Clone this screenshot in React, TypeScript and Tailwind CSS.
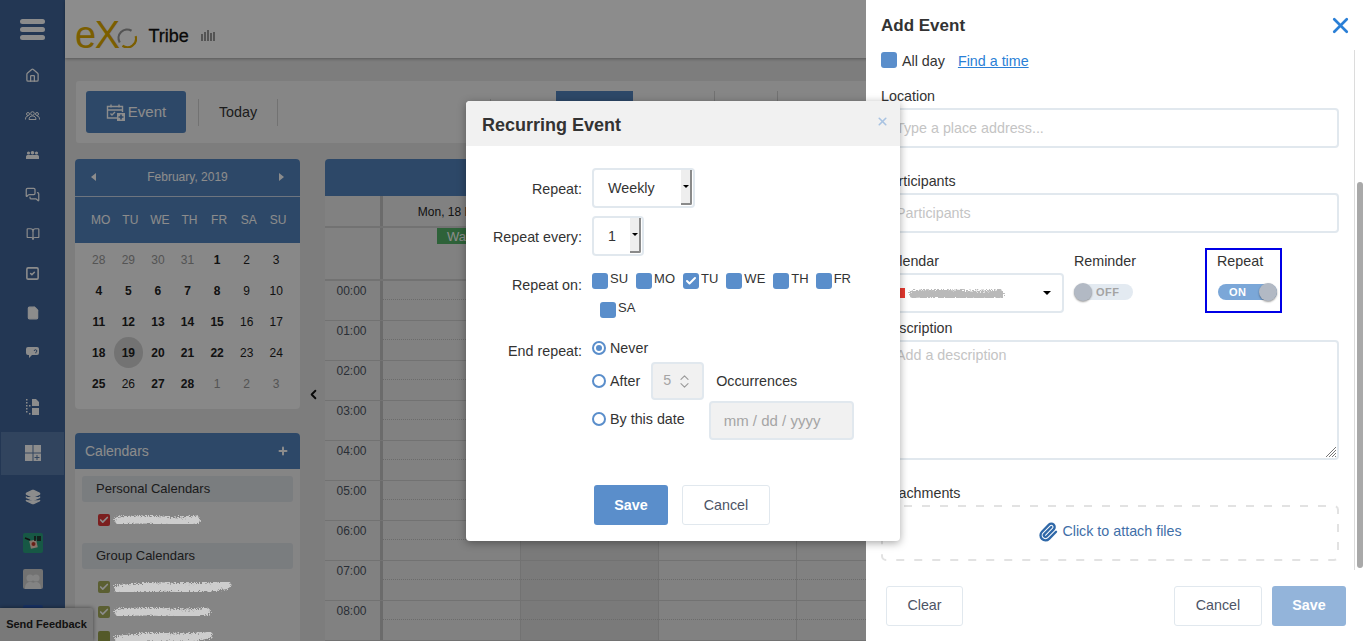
import { useId } from 'react';
import {
  BookOpen,
  Check,
  ChevronLeft,
  ChevronsUpDown,
  File,
  Home,
  Layers,
  MessagesSquare,
  Paperclip,
  Plus,
  SquareCheck,
  X,
} from 'lucide-react';

const weekdays = ['MO', 'TU', 'WE', 'TH', 'FR', 'SA', 'SU'];

// [day, bold, muted]
const days: [number, boolean, boolean][] = [
  [28, false, true], [29, false, true], [30, false, true], [31, false, true], [1, true, false], [2, false, false], [3, false, false],
  [4, true, false], [5, true, false], [6, true, false], [7, true, false], [8, true, false], [9, false, false], [10, false, false],
  [11, true, false], [12, true, false], [13, true, false], [14, true, false], [15, true, false], [16, false, false], [17, false, false],
  [18, true, false], [19, true, false], [20, true, false], [21, true, false], [22, true, false], [23, false, false], [24, false, false],
  [25, true, false], [26, false, false], [27, true, false], [28, true, false], [1, false, true], [2, false, true], [3, false, true],
];

const hours = ['00:00', '01:00', '02:00', '03:00', '04:00', '05:00', '06:00', '07:00', '08:00'];
const columns = ['Mon, 18 Feb', 'Tue, 19 Feb', 'Wed, 20 Feb', 'Thu, 21 Feb'];
const repeatDays = ['SU', 'MO', 'TU', 'WE', 'TH', 'FR', 'SA'];

// Scribbled-out names in the screenshot; sits above the dimming layer
function Redacted({ width, height = 16, tilt = 0, color = '#cdcdcd' }: { width: number; height?: number; tilt?: number; color?: string }) {
  const id = useId();
  const mid = height / 2;
  return (
    <svg width={width} height={height} className="relative z-20 shrink-0 overflow-visible">
      <filter id={id} x="-10%" y="-40%" width="120%" height="180%">
        <feTurbulence type="fractalNoise" baseFrequency="1.1" numOctaves="2" seed="7" />
        <feDisplacementMap in="SourceGraphic" scale="7" />
      </filter>
      <g filter={`url(#${id})`} stroke={color} fill="none" strokeLinecap="round">
        <path
          d={`M4 ${mid + 1 + tilt} Q${width * 0.3} ${mid - 1 + tilt / 2} ${width * 0.55} ${mid + 1} T${width - 5} ${mid - tilt}`}
          strokeWidth={height * 0.6}
        />
        <path d={`M${width * 0.25} ${mid - 2} L${width * 0.8} ${mid + 2 - tilt}`} strokeWidth={height * 0.35} />
      </g>
    </svg>
  );
}

function CalendarCheck({ color, checked = true }: { color: string; checked?: boolean }) {
  return (
    <span className={`flex h-3 w-3 shrink-0 items-center justify-center rounded-[2px] ${color}`}>
      {checked && <Check size={10} strokeWidth={4} className="text-white" />}
    </span>
  );
}

function Sidebar() {
  const iconClass = 'text-white';
  const icons = [
    <Home key="home" size={15} className={iconClass} />,
    <svg key="groups" width="15" height="9" viewBox="0 0 15 9" fill="none" stroke="white" strokeWidth="1">
      <circle cx="7.5" cy="2.5" r="1.8" />
      <circle cx="3" cy="3" r="1.5" />
      <circle cx="12" cy="3" r="1.5" />
      <path d="M.5 8.5c0-2.5 1-3.5 2.5-3.5M14.5 8.5c0-2.5-1-3.5-2.5-3.5M4 8.5c0-2.5 1.5-3.5 3.5-3.5S11 6 11 8.5z" />
    </svg>,
    <svg key="people" width="13" height="8" viewBox="0 0 13 8" fill="white">
      <circle cx="2.5" cy="2" r="1.6" />
      <circle cx="6.5" cy="1.8" r="1.8" />
      <circle cx="10.5" cy="2" r="1.6" />
      <path d="M0 8V5.5C0 4.5 1 4 2 4h9c1 0 2 .5 2 1.5V8z" />
    </svg>,
    <MessagesSquare key="chat" size={15} className={iconClass} />,
    <BookOpen key="wiki" size={14} className={iconClass} />,
    <SquareCheck key="tasks" size={15} strokeWidth={2.5} className={iconClass} />,
    <File key="docs" size={14} fill="white" className={iconClass} />,
    <svg key="forum" width="13" height="11" viewBox="0 0 13 11">
      <path d="M2 0h9a2 2 0 0 1 2 2v4a2 2 0 0 1-2 2H6l-3 3V8H2a2 2 0 0 1-2-2V2a2 2 0 0 1 2-2z" fill="white" />
      <path d="M8.2 4a1.3 1.3 0 1 1 1.6 1.3v1" stroke="#40659a" strokeWidth="1" fill="none" />
    </svg>,
  ];

  return (
    <aside className="flex h-full w-[65px] shrink-0 flex-col items-center bg-[#40659a]">
      <div className="flex h-[56px] w-full flex-col items-center gap-[3px] pt-[19px]">
        <span className="h-[5px] w-[25px] rounded-full bg-white" />
        <span className="h-[5px] w-[25px] rounded-full bg-white" />
        <span className="h-[5px] w-[25px] rounded-full bg-white" />
      </div>
      {icons.map(icon => (
        <div key={icon.key} className="flex h-[39.5px] items-center justify-center">
          {icon}
        </div>
      ))}
      <div className="mt-[15px] flex h-[39.5px] items-center justify-center">
        <svg width="13" height="16" viewBox="0 0 13 16" fill="white">
          <path d="M0 0h1.5v1.5H0zM0 3h1.5v1.5H0zM0 6h1.5v1.5H0zM3 6h1.5v1.5H3zM0 9h1.5v1.5H0zM0 12h1.5v1.5H0zM3 14h1.5v1.5H3zM6 0h4l3 3v4H6zM6 9h7v7H6z" />
        </svg>
      </div>
      <div className="mt-[5px] flex h-[43px] w-[63px] items-center justify-center bg-[#5a7cab]">
        <svg width="16" height="16" viewBox="0 0 16 16" fill="white">
          <path d="M0 0h7.5v7.5H0zM8.5 0H16v7.5H8.5zM0 8.5h7.5V16H0zM8.5 8.5H16V16H8.5zM11.5 10v2h-2v1h2v2h1v-2h2v-1h-2v-2z" fillRule="evenodd" />
        </svg>
      </div>
      <div className="mt-[3px] flex h-[39.5px] items-center justify-center">
        <Layers size={16} fill="white" className={iconClass} />
      </div>
      <div className="mt-4 flex h-5 w-5 items-center justify-center rounded-[2px] bg-[#2aa07f]">
        <svg width="18" height="18" viewBox="0 0 18 18">
          <rect x="6" y="6" width="7" height="8" fill="#f2d6c4" transform="rotate(-12 10 10)" />
          <path d="M1 4l5 2M11 2v5M14 2v5M16 2v5" stroke="#222" strokeWidth="1.6" />
          <circle cx="9.5" cy="10" r="2" fill="#c0392b" />
        </svg>
      </div>
      <div className="mt-4 flex h-5 w-5 items-end justify-center overflow-hidden rounded-[2px] bg-[#d0d0d0]">
        <svg width="18" height="17" viewBox="0 0 18 17" fill="#efefef">
          <circle cx="6" cy="6" r="3.5" />
          <circle cx="12" cy="6" r="3.5" />
          <path d="M1 17c0-5 2-7 5-7s3 1 3 1 1-1 3-1c3 0 5 2 5 7z" />
        </svg>
      </div>
      <div className="mt-4 h-5 w-5 rounded-[2px] bg-[#2c5bb5]" />
    </aside>
  );
}

function MiniCalendar() {
  return (
    <section className="shrink-0 overflow-hidden rounded-[4px] bg-[#f7f7f7]">
      <div className="flex h-[38px] items-center justify-between border-b border-[#c8d6e8] bg-[#5384bd] px-4 pb-[2px] text-[12px] text-white">
        <span className="h-0 w-0 border-y-[4px] border-r-[5px] border-y-transparent border-r-white" />
        <span>February, 2019</span>
        <span className="h-0 w-0 border-y-[4px] border-l-[5px] border-y-transparent border-l-white" />
      </div>
      <div className="grid h-[46px] grid-cols-7 items-center bg-[#5384bd] pl-[11px] pr-[7px] text-center text-[12px] text-white">
        {weekdays.map(day => (
          <span key={day}>{day}</span>
        ))}
      </div>
      <div className="grid grid-cols-7 px-[9px] pb-[10px] pt-px text-center text-[12px] text-[#222]">
        {days.map(([day, bold, muted], i) => (
          <span
            key={i}
            className={`flex h-[31px] items-center justify-center ${bold ? 'font-bold' : ''} ${muted ? 'text-[#999]' : ''} ${
              day === 19 ? 'rounded-[50%] bg-[#d2d2d2]' : ''
            }`}
          >
            {day}
          </span>
        ))}
      </div>
    </section>
  );
}

function CalendarsPanel() {
  return (
    <section className="mt-6 shrink-0 rounded-t-[4px] bg-[#f2f2f2] pb-4">
      <div className="flex h-9 items-center justify-between rounded-t-[4px] bg-[#5384bd] pl-[10px] pr-[11px] text-[14px] text-white">
        <span>Calendars</span>
        <Plus size={12} strokeWidth={4} />
      </div>
      <div className="px-[7px] pt-[7px] text-[13px] text-[#333]">
        <div className="flex h-[26px] items-center rounded-[3px] bg-[#dfe3e8] pl-[14px]">Personal Calendars</div>
        <div className="flex h-[41px] items-center gap-[5px] pb-[6px] pl-4">
          <CalendarCheck color="bg-[#e03a3a]" />
          <Redacted width={86} height={13} />
        </div>
        <div className="flex h-[26px] items-center rounded-[3px] bg-[#dfe3e8] pl-[14px]">Group Calendars</div>
        <div className="flex h-[30px] items-center gap-[5px] pl-4 pt-[5px]">
          <CalendarCheck color="bg-[#a6ad5c]" />
          <Redacted width={116} height={15} tilt={2} />
        </div>
        <div className="flex h-[25px] items-center gap-[5px] pl-4">
          <CalendarCheck color="bg-[#a6ad5c]" />
          <Redacted width={96} height={13} />
        </div>
        <div className="flex h-[25px] items-center gap-[5px] pl-4">
          <CalendarCheck color="bg-[#9aa34c]" checked={false} />
          <Redacted width={98} height={13} tilt={2} />
        </div>
      </div>
    </section>
  );
}

function WeekGrid() {
  return (
    <section className="min-w-0 flex-1">
      <div className="h-[37px] rounded-t-[4px] bg-[#5384bd]" />
      <div className="flex h-[32px] border-b-2 border-[#cfcfcf] bg-[#ececec]">
        <div className="w-[58px] shrink-0 border-r-[3px] border-[#c4c4c4]" />
        {columns.map(label => (
          <div key={label} className="flex w-[138px] shrink-0 items-center justify-center border-r border-[#cfcfcf] pt-px text-[12px] text-[#222]">
            {label}
          </div>
        ))}
      </div>
      <div className="flex h-[53px] border-b-2 border-[#cfcfcf] bg-[#ececec]">
        <div className="w-[58px] shrink-0 border-r-[3px] border-[#c4c4c4]" />
        <div className="w-[138px] shrink-0 border-r border-[#cfcfcf] pl-[54px]">
          <div className="flex h-4 items-center bg-[#55b368] pl-[10px] pt-px text-[13px] text-white">Wake up</div>
        </div>
      </div>
      {hours.map(hour => (
        <div key={hour} className="flex h-10 border-b border-[#cfcfcf] bg-[#ececec]">
          <div className="flex w-[58px] shrink-0 justify-center border-r-[3px] border-[#c4c4c4] pt-px pr-[2px] text-[12px] text-[#4c5563]">
            {hour}
          </div>
          {columns.map((label, i) => (
            <div key={label} className={`w-[138px] shrink-0 border-r border-[#cfcfcf] ${i === 1 ? 'bg-[#dedede]' : ''}`}>
              <div className="h-[19px] border-b border-dotted border-[#c4c4c4]" />
            </div>
          ))}
        </div>
      ))}
    </section>
  );
}

function CalendarPage() {
  return (
    <div className="flex h-full min-w-0 flex-1 flex-col bg-[#e4e4e4]">
      <header className="flex h-[58px] shrink-0 items-center bg-white pl-[10px] pt-[12px] shadow-[0_1px_3px_rgba(0,0,0,0.3)]">
        <span className="text-[38px] leading-none tracking-[-1.5px] text-[#e0ab00]">eX</span>
        <svg width="20" height="20" viewBox="0 0 22 22" className="-ml-px mt-[5px]">
          <path d="M3 16A9.5 9.5 0 0 1 16 3" stroke="#9a9a9a" strokeWidth="2.4" fill="none" />
          <path d="M20.5 9A9.5 9.5 0 0 1 6 19.5" stroke="#e0ab00" strokeWidth="2.4" fill="none" />
        </svg>
        <span className="ml-[11px] mt-[2px] text-[18px] text-[#111] [-webkit-text-stroke:0.3px_#111]">Tribe</span>
        <svg width="15" height="11" viewBox="0 0 15 11" fill="#999" className="ml-[12px] mt-[1px]">
          <path d="M0 4h2v7H0zM3 2h2v9H3zM6 0h2v11H6zM9 3h2v8H9zM12 2h2v9h-2z" />
        </svg>
      </header>
      <div className="min-h-0 flex-1 pl-[10px] pt-[23px]">
        <div className="ml-px flex h-[62px] items-center rounded-l-[3px] bg-[#f4f4f4] pl-[10px] text-[14.3px]">
          <button className="flex h-[42px] w-[100px] items-center justify-center gap-[3px] rounded-[3px] bg-[#5384bd] text-[15px] text-white">
            <svg width="19" height="19" viewBox="0 0 19 19" fill="none" stroke="white" strokeWidth="1.4">
              <path d="M11 15H1.5V3.5h15V9M1.5 7h15M5 1.5v3M13 1.5v3M4.5 10.5l1.5 1.5 3-3" />
              <path d="M11 10h8v8h-8z" fill="white" stroke="none" />
              <path d="M15 11.5v5M12.5 14h5" stroke="#5384bd" strokeWidth="1.6" />
            </svg>
            Event
          </button>
          <span className="ml-3 h-[27px] w-px bg-[#cfcfcf]" />
          <span className="w-[78px] pt-[2px] text-center text-[#333]">Today</span>
          <span className="h-[27px] w-px bg-[#cfcfcf]" />
          <span className="ml-[212px] h-[27px] w-px bg-[#cfcfcf]" />
          <span className="ml-[65px] h-[42px] w-[77px] bg-[#5384bd]" />
          <span className="ml-[81px] h-[42px] w-px bg-[#cfcfcf]" />
          <span className="ml-[62px] h-[42px] w-px bg-[#cfcfcf]" />
        </div>
        <div className="mt-[16px] flex h-[482px] overflow-hidden">
          <div className="flex w-[225px] shrink-0 flex-col">
            <MiniCalendar />
            <CalendarsPanel />
          </div>
          <div className="flex w-[25px] shrink-0 justify-center pl-[2px] pt-[228px] text-[#111]">
            <ChevronLeft size={15} strokeWidth={3} />
          </div>
          <WeekGrid />
        </div>
      </div>
    </div>
  );
}

function BlueCheckbox({ checked = false }: { checked?: boolean }) {
  return (
    <span className="flex h-4 w-4 shrink-0 items-center justify-center rounded-[3px] bg-[#5a8ecb]">
      {checked && <Check size={12} strokeWidth={4} className="text-white" />}
    </span>
  );
}

function Radio({ checked = false }: { checked?: boolean }) {
  return (
    <span className="flex h-[14px] w-[14px] shrink-0 items-center justify-center rounded-full border-2 border-[#5a8ecb]">
      {checked && <span className="h-[6px] w-[6px] rounded-full bg-[#5a8ecb]" />}
    </span>
  );
}

function NativeSelect({ value, width }: { value: string; width: string }) {
  return (
    <div className={`flex h-10 items-stretch rounded-[4px] border-2 border-[#e1e8ee] bg-white pb-px pr-px ${width}`}>
      <span className="flex-1 pl-[14px] text-[14.3px] leading-[36px] text-[#333]">{value}</span>
      <span className="flex w-[11px] items-center justify-center rounded-br-[2px] border-b-2 border-r-2 border-[#8a8a8a] bg-[#eeeeee]">
        <span className="h-0 w-0 border-x-[3px] border-t-[3px] border-x-transparent border-t-black" />
      </span>
    </div>
  );
}

function RecurringModal() {
  return (
    <div className="absolute left-[466px] top-[101px] z-30 h-[440px] w-[434px] overflow-hidden rounded-[4px] bg-white text-[14.3px] text-[#333] shadow-[0_2px_8px_rgba(0,0,0,0.35)]">
      <div className="flex h-[45px] items-center justify-between bg-[#f1f1f1] pl-4 pr-[11px] pt-[3px]">
        <h2 className="text-[18px] font-bold text-[#333]">Recurring Event</h2>
        <X size={13} strokeWidth={3} className="mb-[8px] text-[#a9c3e2]" />
      </div>
      <div className="grid grid-cols-[116px_1fr] gap-x-[10px] pt-[22px]">
        <label className="pt-[11px] text-right leading-5">Repeat:</label>
        <NativeSelect value="Weekly" width="w-[103px]" />

        <label className="mt-2 pt-[11px] text-right leading-5">Repeat every:</label>
        <div className="mt-2">
          <NativeSelect value="1" width="w-[52px]" />
        </div>

        <label className="mt-[17px] text-right leading-[24px]">Repeat on:</label>
        <div className="mt-[17px] flex w-[280px] flex-wrap gap-x-2 gap-y-[13px]">
          {repeatDays.map(day => (
            <span
              key={day}
              className={`flex items-start gap-[2px] text-[13px] leading-[11px] ${day === 'SA' ? 'ml-2' : ''} ${day === 'TH' ? '-mr-px' : ''}`}
            >
              <BlueCheckbox checked={day === 'TU'} />
              {day}
            </span>
          ))}
        </div>

        <label className="mt-[23px] text-right leading-5">End repeat:</label>
        <div className="mt-[23px]">
          <div className="flex h-[14px] items-center gap-1">
            <Radio checked />
            <span className="pt-[2px]">Never</span>
          </div>
          <div className="mt-[7px] flex h-[38px] items-center gap-1">
            <Radio />
            <span className="pt-[2px]">After</span>
            <span className="ml-[7px] flex h-[38px] w-[53px] items-center justify-between rounded-[4px] border-2 border-[#e1e8ee] bg-[#f1f1f1] pl-[10px] pr-[9px] text-[#a5a5a5]">
              5
              <ChevronsUpDown size={17} strokeWidth={1.5} className="text-[#999]" />
            </span>
            <span className="ml-2 pt-[2px]">Occurrences</span>
          </div>
          <div className="mt-px flex h-[39px] items-start gap-1 pt-[11px]">
            <Radio />
            <span className="-mt-[3px]">By this date</span>
            <span className="-mt-[11px] ml-5 flex h-[39px] w-[145px] items-center rounded-[4px] border-2 border-[#e1e8ee] bg-[#f1f1f1] pl-[13px] pt-[2px] text-[15px] text-[#a5a5a5]">
              mm / dd / yyyy
            </span>
          </div>
        </div>
      </div>
      <div className="mt-[45px] flex gap-[14px] pl-[128px]">
        <button className="h-10 w-[74px] rounded-[3px] bg-[#5a8ecb] pt-px font-bold text-white">Save</button>
        <button className="h-10 w-[88px] rounded-[3px] border border-[#e1e8ee] bg-white pt-px text-[#4d5466]">Cancel</button>
      </div>
    </div>
  );
}

function Toggle({ on }: { on: boolean }) {
  return (
    <div
      className={`relative flex h-[16px] w-[59px] items-center rounded-full text-[11px] font-bold tracking-[0.5px] ${
        on ? 'bg-[#7ba7d8] pl-[11px] text-white' : 'bg-[#e3eaf1] pl-[22px] text-[#a3a3a3]'
      }`}
    >
      {on ? 'ON' : 'OFF'}
      <span
        className={`absolute top-[-1px] h-[18px] w-[18px] rounded-full bg-[#b2b9c4] shadow-[0_1px_2px_rgba(0,0,0,0.4)] ${on ? 'right-0' : 'left-0'}`}
      />
    </div>
  );
}

const fieldClass =
  'block h-10 w-full rounded-[4px] border-2 border-[#e1e8ee] bg-white pl-[13px] text-[14.3px] text-[#333] outline-none placeholder:text-[#c4c4c4]';

function EventDrawer() {
  return (
    <div className="absolute right-0 top-0 z-20 flex h-full w-[500px] flex-col bg-white text-[14.3px] text-[#333]">
      <div className="flex h-[50px] shrink-0 items-center justify-between pl-[15px] pr-[13px] pt-px">
        <h2 className="text-[17px] font-bold text-[#333]">Add Event</h2>
        <X size={25} strokeWidth={2.6} className="text-[#2a7fd6]" />
      </div>
      <div className="flex h-[520px] shrink-0">
        <div className="ml-[15px] w-[458px] shrink-0">
          <div className="mt-[2px] flex h-4 items-center">
            <BlueCheckbox />
            <span className="ml-[5px] pt-[3px]">All day</span>
            <a className="ml-[13px] pt-[3px] text-[#2a7fd6] underline">Find a time</a>
          </div>

          <label className="mt-[18px] block leading-5">Location</label>
          <input className={`mt-[2px] ${fieldClass}`} placeholder="Type a place address..." readOnly />

          <label className="mt-[23px] block leading-5">Participants</label>
          <input className={`mt-[2px] ${fieldClass}`} placeholder="Participants" readOnly />

          <div className="mt-[15px] flex h-[65px]">
            <div className="w-[193px] shrink-0 pt-[3px]">
              <span className="block leading-5">Calendar</span>
              <div className="mt-[2px] flex h-10 w-[183px] items-center rounded-[4px] border-2 border-[#e1e8ee] pl-[10px] pr-[11px]">
                <span className="h-[10px] w-[12px] shrink-0 bg-[#e8392f]" />
                <span className="ml-[5px]">
                  <Redacted width={94} height={15} color="#b9b9b9" />
                </span>
                <span className="ml-auto h-0 w-0 border-x-[4px] border-t-[4px] border-x-transparent border-t-black" />
              </div>
            </div>
            <div className="w-[131px] shrink-0 pt-[3px]">
              <span className="block leading-5">Reminder</span>
              <div className="mt-[13px]">
                <Toggle on={false} />
              </div>
            </div>
            <div className="h-[65px] w-[77px] shrink-0 border-2 border-[#0000e6] pl-[10px] pt-px">
              <span className="block leading-5">Repeat</span>
              <div className="ml-px mt-[13px]">
                <Toggle on />
              </div>
            </div>
          </div>

          <label className="mt-[5px] block leading-5">Description</label>
          <div className="relative mt-[2px] h-[120px]">
            <textarea className={`${fieldClass} h-full resize-none pt-[3px]`} placeholder="Add a description" readOnly />
            <svg width="10" height="10" viewBox="0 0 10 10" stroke="#777" className="absolute bottom-[3px] right-[3px]">
              <path d="M0 10L10 0M3 10l7-7M6 10l4-4M9 10l1-1" />
            </svg>
          </div>

          <label className="mt-[23px] block leading-5">Attachments</label>
          <div className="relative mt-[2px] flex h-[56px] items-center justify-center gap-[4px] pb-[3px] text-[#3f6fa8]">
            <svg width="458" height="56" className="absolute left-0 top-0">
              <rect x="1" y="1" width="456" height="54" rx="4" fill="none" stroke="#e2e2e2" strokeWidth="2" strokeDasharray="8 10" />
            </svg>
            <Paperclip size={20} strokeWidth={2.8} className="text-[#2f68a8]" />
            Click to attach files
          </div>
        </div>
        <div className="ml-[15px] w-[10px] shrink-0 border-l border-[#dcdcdc] pl-[2px]">
          <div className="mt-[132px] h-[386px] w-[6px] rounded-full bg-[#a9a9a9]" />
        </div>
      </div>
      <div className="flex flex-1 items-start pl-5 pr-5 pt-4">
        <button className="h-10 w-[77px] rounded-[3px] border border-[#e1e8ee] text-[#4d5466]">Clear</button>
        <button className="ml-auto h-10 w-[88px] rounded-[3px] border border-[#e1e8ee] text-[#4d5466]">Cancel</button>
        <button className="ml-[10px] h-10 w-[74px] rounded-[3px] bg-[#93b4da] font-bold text-white">Save</button>
      </div>
    </div>
  );
}

export default function App() {
  return (
    <div className="relative flex h-[641px] w-[1366px] overflow-hidden font-['Liberation_Sans',sans-serif]">
      <Sidebar />
      <CalendarPage />
      <div className="absolute bottom-0 left-0 flex h-[33px] w-[93px] items-center justify-center rounded-tr-[2px] bg-[#dcdcdc] text-[11px] font-bold text-[#222] shadow-[0_0_4px_rgba(0,0,0,0.5)]">
        Send Feedback
      </div>
      {/* dims the page behind the drawer */}
      <div className="absolute inset-0 z-10 bg-black/45" />
      <EventDrawer />
      <RecurringModal />
    </div>
  );
}
